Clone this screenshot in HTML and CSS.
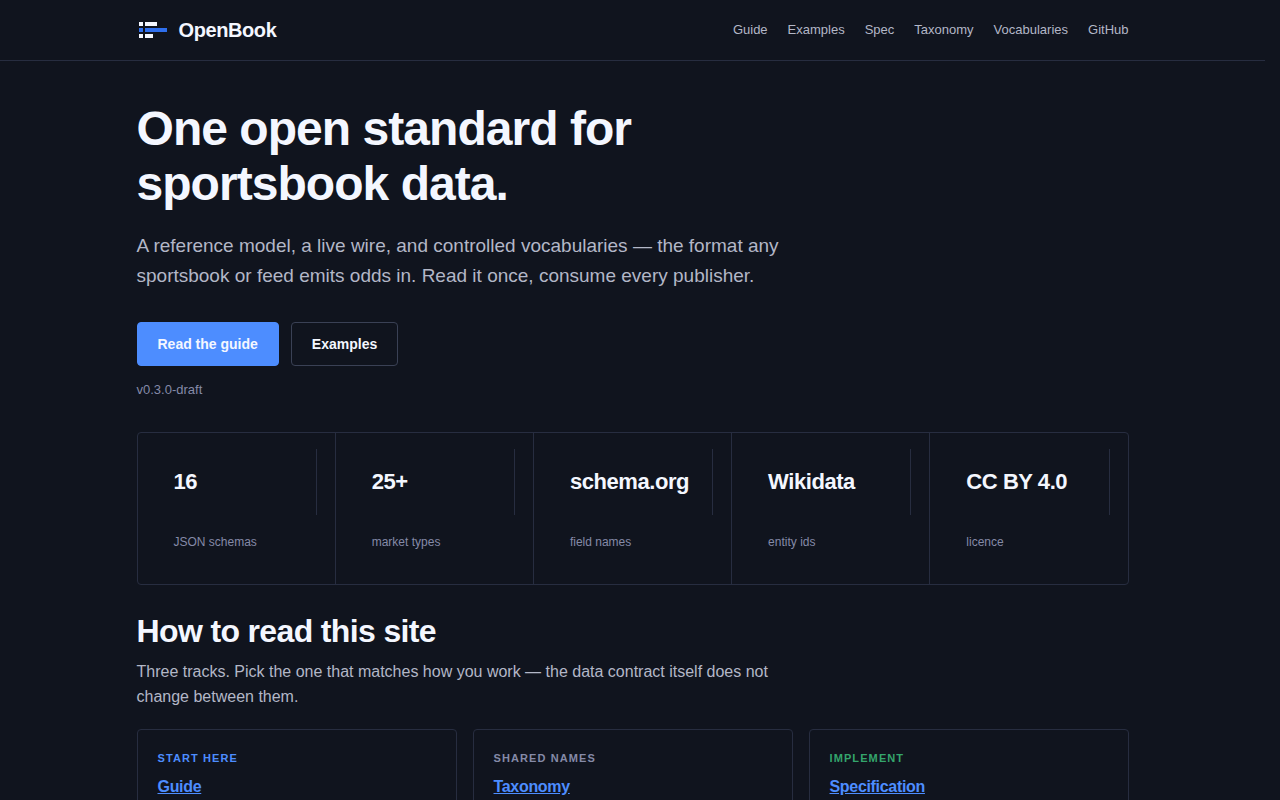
FILE: index.html
```html
<!DOCTYPE html>
<html lang="en">
<head>
<meta charset="utf-8">
<meta name="viewport" content="width=device-width, initial-scale=1">
<title>OpenBook</title>
<link rel="stylesheet" href="styles.css">
</head>
<body class="page">
<header class="site-header">
  <div class="container header-row">
    <a class="brand" href="#">
      <svg class="brand-mark" viewBox="0 0 32 32" width="32" height="32" aria-hidden="true" shape-rendering="crispEdges">
        <g fill="#f4f7ff"><rect x="2" y="8" width="4" height="4"/><rect x="8" y="8" width="12" height="4"/><rect x="2" y="20" width="4" height="4"/><rect x="8" y="20" width="8" height="4"/></g>
        <g fill="#2f6fed"><rect x="2" y="14" width="4" height="4"/><rect x="8" y="14" width="22" height="4"/></g>
      </svg>
      <span>OpenBook</span>
    </a>
    <nav class="nav" aria-label="Main">
      <a href="#">Guide</a>
      <a href="#">Examples</a>
      <a href="#">Spec</a>
      <a href="#">Taxonomy</a>
      <a href="#">Vocabularies</a>
      <a href="#">GitHub</a>
    </nav>
  </div>
</header>
<main class="container">
  <section class="hero">
    <h1 class="hero-title">One open standard for sportsbook data.</h1>
    <p class="hero-lead">A reference model, a live wire, and controlled vocabularies — the format any sportsbook or feed emits odds in. Read it once, consume every publisher.</p>
    <div class="actions">
      <a class="button button-primary" href="#">Read the guide</a>
      <a class="button" href="#">Examples</a>
    </div>
    <p class="version">v0.3.0-draft</p>
  </section>
  <dl class="stats">
    <div class="stat"><dt class="stat-value">16</dt><dd class="stat-label">JSON schemas</dd></div>
    <div class="stat"><dt class="stat-value">25+</dt><dd class="stat-label">market types</dd></div>
    <div class="stat"><dt class="stat-value">schema.org</dt><dd class="stat-label">field names</dd></div>
    <div class="stat"><dt class="stat-value">Wikidata</dt><dd class="stat-label">entity ids</dd></div>
    <div class="stat"><dt class="stat-value">CC BY 4.0</dt><dd class="stat-label">licence</dd></div>
  </dl>
  <section class="tracks">
    <h2 class="section-title">How to read this site</h2>
    <p class="section-lead">Three tracks. Pick the one that matches how you work — the data contract itself does not change between them.</p>
    <div class="cards">
      <article class="card"><p class="kicker kicker-blue">Start here</p><h3 class="card-title"><a href="#">Guide</a></h3></article>
      <article class="card"><p class="kicker">Shared names</p><h3 class="card-title"><a href="#">Taxonomy</a></h3></article>
      <article class="card"><p class="kicker kicker-green">Implement</p><h3 class="card-title"><a href="#">Specification</a></h3></article>
    </div>
  </section>
</main>
</body>
</html>
```

FILE: styles.css
```css
:root {
  --bg: #10141e;
  --line: #272d40;
  --line-strong: #3a4155;
  --text: #f4f7ff;
  --muted: #b3b7c7;
  --faint: #858aa8;
  --blue: #4d8dff;
  --green: #34a56c;
}

* { box-sizing: border-box; }

.page {
  margin: 0;
  padding-right: 15px;
  background: var(--bg);
  color: var(--text);
  font-family: "Liberation Sans", Arial, sans-serif;
  font-size: 16px;
  line-height: 25px;
}

.container {
  max-width: 1040px;
  margin: 0 auto;
  padding: 0 24px;
}

.site-header { border-bottom: 1px solid var(--line); }

.header-row {
  display: flex;
  align-items: center;
  justify-content: space-between;
  min-height: 60px;
}

.brand {
  display: flex;
  align-items: center;
  gap: 10px;
  color: var(--text);
  font-size: 20px;
  font-weight: 700;
  letter-spacing: -0.02em;
  text-decoration: none;
}

.nav {
  display: flex;
  flex-wrap: wrap;
  gap: 20px;
  font-size: 13px;
  line-height: 20px;
}

.nav a { color: var(--muted); text-decoration: none; }

.hero { padding: 40px 0 32px; }

.hero-title {
  max-width: 640px;
  margin: 0 0 20px;
  font-size: 48px;
  line-height: 55px;
  letter-spacing: -0.02em;
}

.hero-lead {
  max-width: 660px;
  margin: 0;
  color: var(--muted);
  font-size: 19px;
  line-height: 30px;
}

.actions {
  display: flex;
  flex-wrap: wrap;
  gap: 12px;
  margin-top: 31px;
}

.button {
  padding: 11px 20px;
  border: 1px solid var(--line-strong);
  border-radius: 4px;
  color: var(--text);
  font-size: 14px;
  font-weight: 700;
  line-height: 20px;
  text-decoration: none;
}

.button-primary { border-color: var(--blue); background: var(--blue); }

.version {
  margin: 14px 0 0;
  color: var(--faint);
  font-size: 13px;
  line-height: 20px;
}

.stats {
  display: flex;
  margin: 0;
  border: 1px solid var(--line);
  border-radius: 4px;
}

.stat {
  flex: 1 1 0;
  padding: 16px 18px;
  border-right: 1px solid var(--line);
}

.stat:last-child { border-right: 0; }

.stat-value {
  padding: 16px 18px;
  border-right: 1px solid var(--line);
  font-size: 22px;
  font-weight: 700;
  line-height: 34px;
  letter-spacing: -0.02em;
  white-space: nowrap;
}

.stat-label {
  margin: 2px 0 0;
  padding: 16px 18px;
  color: var(--faint);
  font-size: 12px;
  line-height: 19px;
}

.tracks { padding: 27px 0 48px; }

.section-title {
  margin: 0 0 9px;
  font-size: 32px;
  line-height: 38px;
  letter-spacing: -0.02em;
}

.section-lead {
  max-width: 660px;
  margin: 0 0 20px;
  color: var(--muted);
}

.cards {
  display: grid;
  grid-template-columns: repeat(3, 1fr);
  gap: 16px;
}

.card {
  padding: 20px;
  border: 1px solid var(--line);
  border-radius: 4px;
}

.kicker {
  margin: 0 0 7px;
  color: var(--faint);
  font-size: 11px;
  font-weight: 700;
  line-height: 17px;
  letter-spacing: 0.1em;
  text-transform: uppercase;
}

.kicker-blue { color: var(--blue); }
.kicker-green { color: var(--green); }

.card-title {
  margin: 0;
  font-size: 16px;
  line-height: 25px;
  letter-spacing: -0.02em;
}

.card-title a { color: var(--blue); }
```
